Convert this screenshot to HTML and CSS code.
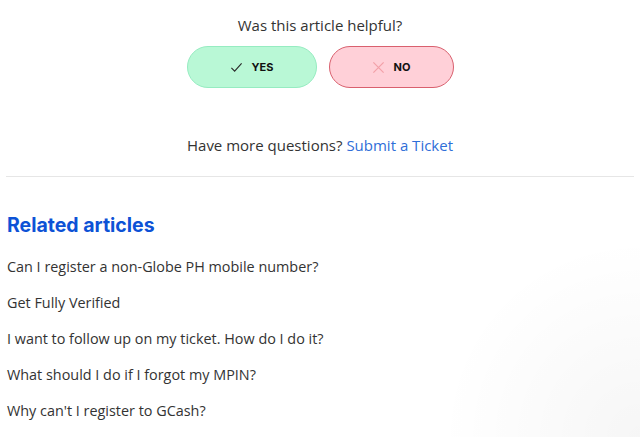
FILE: index.html
```html
<!DOCTYPE html>
<html>
<head>
<meta charset="utf-8">
<link rel="stylesheet" href="styles.css">
</head>
<body>
<div class="page">
  <section class="feedback">
    <p class="question">Was this article helpful?</p>
    <div class="votes">
      <button class="vote yes">
        <svg class="icon" viewBox="0 0 14 14" width="13" height="13"><path d="M1.5 7.5 L5 11 L12.5 2.5" fill="none" stroke="#2a2a2a" stroke-width="1.2"/></svg>
        <span>YES</span>
      </button>
      <button class="vote no">
        <svg class="icon" viewBox="0 0 14 14" width="13" height="13"><path d="M1.5 1.5 L12.5 12.5 M12.5 1.5 L1.5 12.5" fill="none" stroke="#f3a0a8" stroke-width="1.3"/></svg>
        <span>NO</span>
      </button>
    </div>
    <p class="more">Have more questions? <a href="#" class="link">Submit a Ticket</a></p>
  </section>
  <hr class="divider">
  <section class="related">
    <h2 class="related-title">Related articles</h2>
    <ul class="related-list">
      <li><a href="#">Can I register a non-Globe PH mobile number?</a></li>
      <li><a href="#">Get Fully Verified</a></li>
      <li><a href="#">I want to follow up on my ticket. How do I do it?</a></li>
      <li><a href="#">What should I do if I forgot my MPIN?</a></li>
      <li><a href="#">Why can't I register to GCash?</a></li>
    </ul>
  </section>
</div>
</body>
</html>
```
FILE: styles.css
```css
html, body {
  margin: 0;
  padding: 0;
}
html {
  min-height: 100%;
  background: #ffffff radial-gradient(circle at 100% 100%, rgba(0,0,0,0.035) 0, rgba(0,0,0,0) 200px) no-repeat;
}
body {
  font-family: "Open Sans", "Liberation Sans", sans-serif;
  color: #333333;
}
.page {
  padding: 0 6px;
}
.feedback {
  display: flex;
  flex-direction: column;
  align-items: center;
  padding-top: 15px;
}
.question {
  margin: 0;
  font-size: 15px;
  line-height: 20px;
  color: #333;
}
.votes {
  display: flex;
  gap: 12px;
  margin-top: 11px;
}
.vote {
  display: flex;
  align-items: center;
  justify-content: center;
  gap: 9px;
  height: 42px;
  border-radius: 21px;
  font-family: "Inter", "Liberation Sans", sans-serif;
  font-weight: 700;
  font-size: 11px;
  color: #111;
  padding: 0;
  cursor: pointer;
}
.vote.yes {
  width: 130px;
  background: #b9f8d6;
  border: 1px solid #96ecc1;
}
.vote.no {
  width: 125px;
  background: #ffd0d8;
  border: 1px solid #d9606e;
}
.more {
  margin: 47px 0 0;
  font-size: 15px;
  line-height: 20px;
  color: #333;
}
.link {
  color: #2f6ed8;
  text-decoration: none;
}
.divider {
  border: 0;
  border-top: 1px solid #e6e6e6;
  margin: 21px 0 0;
}
.related {
  padding-left: 1px;
}
.related-title {
  margin: 36px 0 0;
  font-family: "Inter", "Liberation Sans", sans-serif;
  font-weight: 700;
  font-size: 19.5px;
  line-height: 24px;
  color: #0d52d6;
}
.related-list {
  list-style: none;
  margin: 20px 0 0;
  padding: 0;
}
.related-list li {
  height: 36px;
  font-size: 14.4px;
  line-height: 20px;
}
.related-list a {
  color: #333;
  text-decoration: none;
}
```
